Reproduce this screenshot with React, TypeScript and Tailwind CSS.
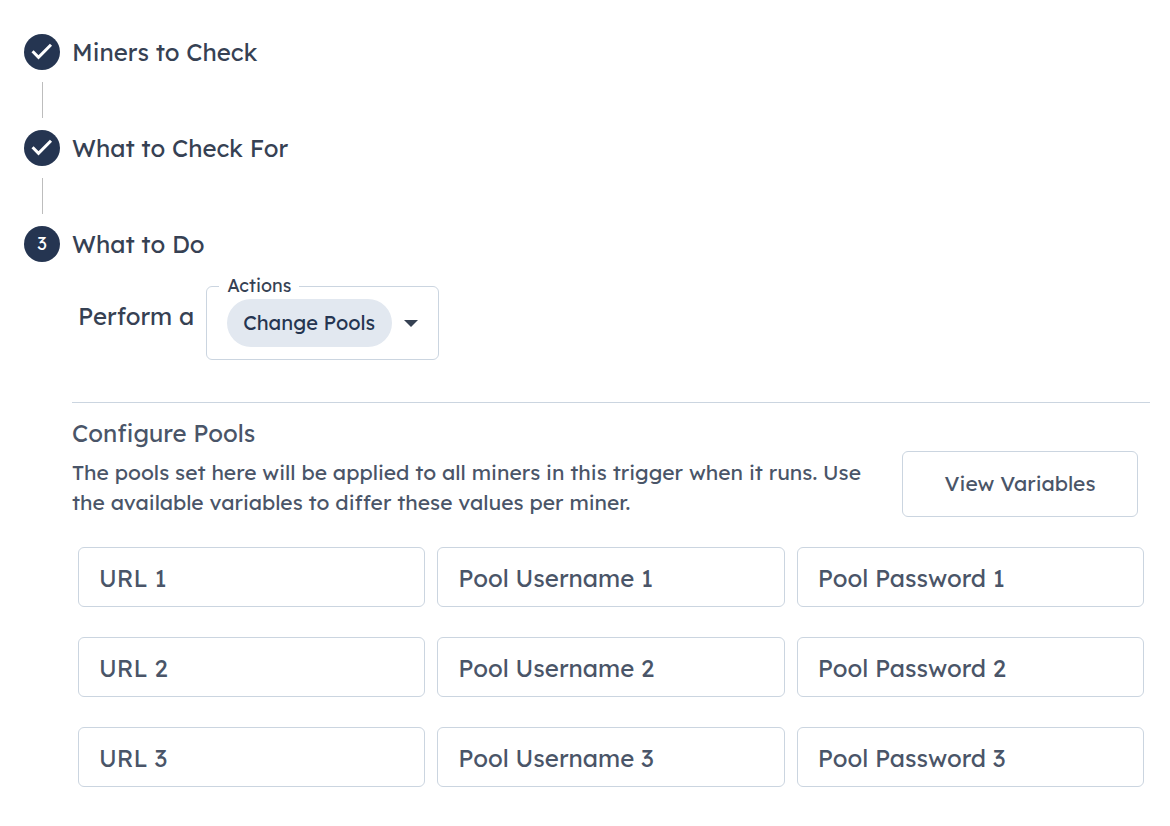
import { useState } from 'react';

const columns = ['URL', 'Pool Username', 'Pool Password'];
const pools = [1, 2, 3];

function CheckMark() {
  return (
    <svg viewBox="0 0 24 24" className="size-7" fill="none" stroke="currentColor" strokeWidth="2.6" aria-hidden="true">
      <path d="M3.9 11.4 9 16.5 19.7 5.8" />
    </svg>
  );
}

function StepHeader({ title, number, done }: { title: string; number: number; done?: boolean }) {
  return (
    <div className="flex items-center gap-3">
      <span className="flex size-9 shrink-0 items-center justify-center rounded-full bg-[#253551] text-lg text-white">
        {done ? <CheckMark /> : number}
      </span>
      <h2 className="text-2xl text-[#364153]">{title}</h2>
    </div>
  );
}

function Connector() {
  return <div className="my-3 ml-[18px] h-9 w-px bg-[#bdbdbd]" />;
}

export default function App() {
  const [action, setAction] = useState('Change Pools');

  return (
    <main className="bg-white pt-[34px] pr-5 pb-10 pl-6 font-['Lexend','Inter',sans-serif] text-[#4a5568]">
      <StepHeader title="Miners to Check" number={1} done />
      <Connector />
      <StepHeader title="What to Check For" number={2} done />
      <Connector />
      <StepHeader title="What to Do" number={3} />

      <div className="ml-12">
        <div className="mt-3 flex items-center gap-3 pl-[6px]">
          <span className="pb-[2px] text-2xl text-[#364153]">Perform a</span>
          <fieldset className="rounded-md border border-[#cbd5e0] pt-px pr-5 pb-3 pl-5">
            <legend className="-ml-2 px-2 text-lg leading-6 text-[#364153]">
              <label htmlFor="action">Actions</label>
            </legend>
            <div className="flex items-center gap-3">
              <select
                id="action"
                value={action}
                onChange={(e) => setAction(e.target.value)}
                className="h-12 appearance-none rounded-full bg-[#e2e8f0] px-4 text-xl text-[#253551]"
              >
                <option>Change Pools</option>
              </select>
              <svg viewBox="0 0 14 7" className="h-[7px] w-[14px] text-[#364153]" fill="currentColor" aria-hidden="true">
                <path d="M0 0h14L7 7z" />
              </svg>
            </div>
          </fieldset>
        </div>

        <section className="mt-[42px] border-t border-[#cbd5e0] pt-3">
          <div className="flex items-end justify-between gap-6 pr-3">
            <div>
              <h3 className="text-2xl leading-9">Configure Pools</h3>
              <p className="mt-[6px] max-w-[806px] text-[21px] leading-[30px]">
                The pools set here will be applied to all miners in this trigger when it runs. Use the available
                variables to differ these values per miner.
              </p>
            </div>
            <button
              type="button"
              className="h-[66px] w-[236px] shrink-0 rounded-md border border-[#cbd5e0] pb-[2px] text-[21px] leading-[30px]"
            >
              View Variables
            </button>
          </div>

          <div className="mt-[30px] flex flex-col gap-[30px] px-[6px]">
            {pools.map((n) => (
              <div key={n} className="grid grid-cols-3 gap-3">
                {columns.map((name) => (
                  <input
                    key={name}
                    type="text"
                    aria-label={`${name} ${n}`}
                    placeholder={`${name} ${n}`}
                    className="h-[60px] w-full min-w-0 rounded-md border border-[#cbd5e0] px-5 pt-[2px] text-2xl placeholder:text-[#4a5568]"
                  />
                ))}
              </div>
            ))}
          </div>
        </section>
      </div>
    </main>
  );
}
